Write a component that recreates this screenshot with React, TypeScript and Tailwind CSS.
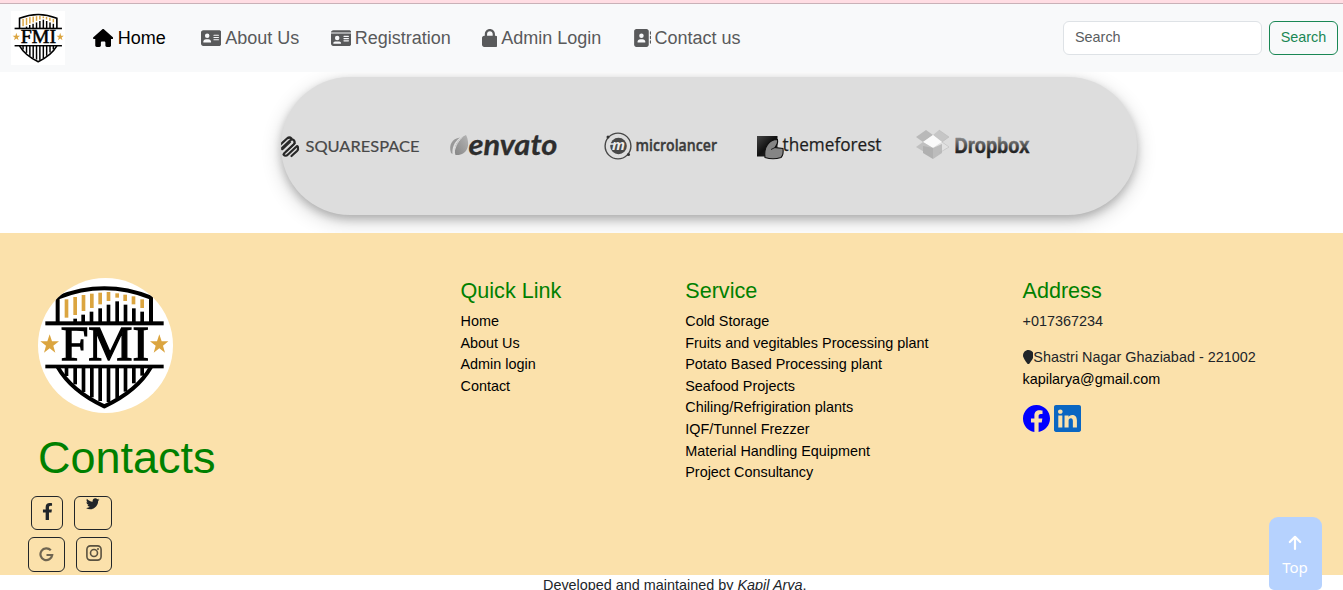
import type { ReactNode } from "react";
import {
  FaAddressBook,
  FaAddressCard,
  FaHouse,
  FaIdCard,
  FaLocationPin,
  FaLock,
} from "react-icons/fa6";
import { FaFacebookF, FaTwitter } from "react-icons/fa";
import { BsFacebook, BsLinkedin } from "react-icons/bs";

const goldBars = [
  [134, 103, 158],
  [160, 96, 150],
  [185, 90, 138],
  [210, 86, 129],
  [235, 83, 118],
  [260, 81, 108],
  [286, 85, 98],
  [310, 89, 108],
  [335, 94, 118],
  [361, 103, 129],
];

const blackBars = [
  [160, 161],
  [184, 149],
  [209, 140],
  [235, 130],
  [260, 119],
  [286, 109],
  [311, 119],
  [336, 130],
  [361, 140],
];

const lowerBars = [
  [134, 333],
  [160, 358],
  [185, 381],
  [210, 397],
  [235, 408],
  [260, 411],
  [286, 399],
  [311, 380],
  [336, 355],
  [361, 332],
];

function FmiLogo({ className, full }: { className: string; full?: boolean }) {
  return (
    <svg className={className} viewBox={full ? "49 44 405 405" : "54 39 405 405"}>
      <rect x="40" y="30" width="430" height="430" fill="#fff" />
      <path d="M113 173V98Q253 42 393 98V173" fill="none" stroke="#000" strokeWidth="12" />
      {goldBars.map(([x, a, b]) => (
        <rect key={x} x={x} y={a} width="11" height={b - a} fill="#dba540" />
      ))}
      {blackBars.map(([x, y]) => (
        <rect key={x} x={x} y={y} width="11" height={175 - y} />
      ))}
      <rect x="76" y="169" width="355" height="12" />
      <rect x="76" y="299" width="355" height="11" />
      <path d="M113 306C145 362 195 397 253 424C311 397 361 362 393 306" fill="none" stroke="#000" strokeWidth="12" />
      {lowerBars.map(([x, b]) => (
        <rect key={x} x={x} y="305" width="11" height={b - 305} />
      ))}
      <text
        x="122"
        y="286"
        textLength="265"
        lengthAdjust="spacingAndGlyphs"
        fontFamily="Liberation Serif, serif"
        fontSize="146"
        stroke="#000"
        strokeWidth="4"
      >
        FMI
      </text>
      <path fill="#dba540" d="M89 208L96 229H117L100 242L106 263L89 250L72 263L78 242L61 229H82Z" />
      <path fill="#dba540" d="M418 208L425 229H445L429 242L435 263L418 250L401 263L407 242L390 229H411Z" />
    </svg>
  );
}

function NavItem({ icon, label, className }: { icon: ReactNode; label: string; className: string }) {
  return (
    <a className={`flex items-center whitespace-nowrap text-[18px] leading-[27px] ${className}`}>
      {icon}
      <span>{label}</span>
    </a>
  );
}

function Sponsors() {
  return (
    <svg className="h-[138px] w-[856px]" viewBox="281 77 856 138">
      <defs>
        <linearGradient id="dropText" x1="0" y1="0" x2="0" y2="1">
          <stop offset="0.2" stopColor="#888" />
          <stop offset="0.75" stopColor="#222" />
        </linearGradient>
        <linearGradient id="forest" x1="0" y1="0" x2="1" y2="1">
          <stop offset="0" stopColor="#444" />
          <stop offset="0.5" stopColor="#111" />
          <stop offset="1" stopColor="#333" />
        </linearGradient>
        <linearGradient id="leaf" x1="1" y1="0" x2="0" y2="1">
          <stop offset="0" stopColor="#b5b5b5" />
          <stop offset="1" stopColor="#858585" />
        </linearGradient>
      </defs>

      <g fill="none" stroke="#282828" strokeWidth="2.2" strokeLinecap="round">
        <path d="M280 145L287 138.5Q289.500 136.500 291.500 138.500" />
        <path d="M279 151L290 140.500Q292.500 138.500 294 140.500Q295.500 142.500 293.500 144.500L284 153.500" />
        <path d="M282.500 149.500L290.500 142" strokeWidth="1.400" />
        <path d="M283.500 154.500Q285.500 157 288 154.500L296 147Q298 145 298 148Q298.500 149.500 297 151L291.500 156" />
        <path d="M286 151.500L295 143.500" strokeWidth="1.400" />
      </g>
      <text x="305.500" y="152.200" textLength="114" lengthAdjust="spacingAndGlyphs" fontFamily="Lato, sans-serif" fontSize="16" fill="#484848" stroke="#484848" strokeWidth="0.200">
        SQUARESPACE
      </text>

      <path d="M451 153C448.500 145 452 138.500 460 137.500C454 142 452 148 452.500 154Z" fill="#999" />
      <path d="M466 135C471 145 467 156 455.500 155C452.500 147 458 138.500 466 135Z" fill="url(#leaf)" />
      <path d="M454 155C454 149 457 142 462 137.500" fill="none" stroke="#ddd" strokeWidth="1" />
      <text x="468.500" y="155" textLength="89" lengthAdjust="spacingAndGlyphs" fontFamily="Lato, sans-serif" fontSize="29" fontWeight="700" fontStyle="italic" fill="#2d2d2d" stroke="#2d2d2d" strokeWidth="0.300">
        envato
      </text>

      <circle cx="618" cy="146" r="12.900" fill="none" stroke="#484848" strokeWidth="1.400" />
      <circle cx="618.500" cy="146" r="8.300" fill="#484848" />
      <circle cx="608" cy="137" r="1.500" fill="#333" />
      <circle cx="628.500" cy="154.500" r="1.500" fill="#333" />
      <text x="612" y="150" textLength="13" lengthAdjust="spacingAndGlyphs" fontFamily="Open Sans, sans-serif" fontSize="13.500" fontWeight="700" fontStyle="italic" fill="#eee">
        m
      </text>
      <path d="M609.500 144H614" stroke="#eee" strokeWidth="1.300" />
      <text x="635.500" y="151.300" textLength="81.500" lengthAdjust="spacingAndGlyphs" fontFamily="Open Sans, sans-serif" fontSize="16.500" fontWeight="600" fill="#3b3b3b" stroke="#3b3b3b" strokeWidth="0.4">
        microlancer
      </text>

      <rect x="757" y="136" width="20.500" height="20.500" fill="url(#forest)" />
      <path d="M765 157.500C763.500 147 769 139.500 777.500 139.500C778 142 777 145 775 147.500L783 148.500C783.500 152 783.500 155 781 157.500Q773 160 765 157.500Z" fill="#858585" stroke="#111" strokeWidth="1.100" />
      <path d="M771 149.500L775 147.500" stroke="#222" strokeWidth="1" />
      <text x="782.500" y="151.300" textLength="99" lengthAdjust="spacingAndGlyphs" fontFamily="Open Sans, sans-serif" fontSize="19" fill="#1d1d1d" stroke="#1d1d1d" strokeWidth="0.250">
        themeforest
      </text>

      <path d="M916 137L926 130L933 135L923 142Z" fill="#b9b9b9" />
      <path d="M933 135L939 130L949 137L942 142Z" fill="#c6c6c6" />
      <path d="M923 142L933 135L942 142L933 148Z" fill="#fafafa" />
      <path d="M916 147L923 142L933 148L926 153Z" fill="#c0c0c0" />
      <path d="M933 148L942 142L949 147L939 153Z" fill="#e2e2e2" />
      <path d="M923 153V146L933 148V159Z" fill="#b0b0b0" />
      <path d="M933 148L942 144V153L933 159Z" fill="#bcbcbc" />
      <path d="M939 130L949 137L942 142L949 147L939 153" fill="none" stroke="#b4b4b4" strokeWidth="0.500" />
      <text x="954.500" y="153" textLength="75" lengthAdjust="spacingAndGlyphs" fontFamily="Liberation Sans, sans-serif" fontSize="22" fontWeight="700" fill="url(#dropText)" stroke="url(#dropText)" strokeWidth="0.500">
        Dropbox
      </text>
    </svg>
  );
}

function LinkColumn({ title, items, className }: { title: string; items: string[]; className: string }) {
  return (
    <div className={className}>
      <h5 className="mb-[7px] text-[21.6px] leading-[26px] text-[#008000]">{title}</h5>
      <ul className="text-black">
        {items.map((item) => (
          <li key={item}>{item}</li>
        ))}
      </ul>
    </div>
  );
}

const socialBox = "flex justify-center rounded-[6px] border border-[#212529] text-[#212529]";

export default function App() {
  return (
    <div className="flex h-[590px] w-[1343px] flex-col overflow-hidden bg-white font-['Liberation_Sans',Arial,sans-serif] text-[14.4px] leading-[21.6px] text-[#212529]">
      <div className="h-1 shrink-0 border-b border-[#c9b1b7] bg-[#ffdde3]" />
      <nav className="relative z-10 flex h-[68px] shrink-0 items-center bg-[#f8f9fa] pr-[5px] pl-[11px]">
        <FmiLogo full className="mb-px h-[54px] w-[54px] bg-white" />
        <NavItem
          className="ml-[28px] w-[108px] text-black"
          label="Home"
          icon={<FaHouse className="mr-[4.500px] h-[18px] w-[20.25px] shrink-0" />}
        />
        <NavItem
          className="w-[129.500px] text-[#595a5b]"
          label="About Us"
          icon={<FaAddressCard className="mr-[4px] h-[18px] w-[20.25px] shrink-0" />}
        />
        <NavItem
          className="w-[151px] text-[#595a5b]"
          label="Registration"
          icon={<FaIdCard className="mr-[4px] h-[18px] w-[20.25px] shrink-0" />}
        />
        <NavItem
          className="w-[151px] text-[#595a5b]"
          label="Admin Login"
          icon={<FaLock className="mr-[4px] h-[18px] w-[15.75px] shrink-0" />}
        />
        <NavItem
          className="text-[#595a5b]"
          label="Contact us"
          icon={<FaAddressBook className="mr-[4px] h-[18px] w-[18px] shrink-0" />}
        />
        <form className="ml-auto flex">
          <input
            placeholder="Search"
            className="mr-[7px] h-[34px] w-[199px] rounded-[6px] border border-[#dee2e6] bg-white px-[11px] pb-[3px] text-[14.4px] placeholder:text-[#5a5d60]"
          />
          <button type="button" className="h-[34px] w-[69px] rounded-[6px] border border-[#198754] pb-px text-[14.4px] text-[#198754]">
            Search
          </button>
        </form>
      </nav>

      <section className="mt-[5px] ml-[281px] h-[138px] w-[856px] shrink-0 overflow-hidden rounded-full bg-[#ddd] shadow-[0_4px_8px_0_rgba(0,0,0,0.2),0_6px_20px_0_rgba(0,0,0,0.19)]">
        <Sponsors />
      </section>

      <footer className="relative mt-[18px] flex h-[342px] shrink-0 bg-[#fbe1ab]">
        <div className="w-[460.500px] pt-[45px]">
          <FmiLogo className="ml-[38px] h-[135px] w-[135px] rounded-full" />
          <h1 className="mt-[18px] ml-[38px] text-[45px] leading-[54px] text-[#008000]">Contacts</h1>
          <div className="mt-[11px] ml-[31px] flex gap-[11px]">
            <a className={`h-[34px] w-[32px] pt-[6px] ${socialBox}`}>
              <FaFacebookF className="h-[17px] w-[17px]" />
            </a>
            <a className={`h-[34px] w-[38px] ${socialBox}`}>
              <FaTwitter className="h-[13.500px] w-[13.500px]" />
            </a>
          </div>
          <div className="mt-[7px] ml-[28px] flex gap-[11px]">
            <a className={`h-[35px] w-[37px] items-center ${socialBox}`}>
              <svg className="h-[15px] w-[15px]" viewBox="0 0 15 15" fill="none" stroke="#6f6551" strokeWidth="2.200">
                <path d="M11.800 3.300A5.900 5.900 0 1 0 13.200 8H7.500" />
              </svg>
            </a>
            <a className={`h-[35px] w-[36px] pt-[7px] ${socialBox}`}>
              <svg className="h-[16px] w-[16px]" viewBox="0 0 16 16" fill="none" stroke="#5a5240" strokeWidth="1.600">
                <rect x="0.900" y="0.900" width="14.200" height="14.200" rx="3.500" />
                <circle cx="8" cy="8" r="3.500" />
                <circle cx="12" cy="4" r="1" fill="#5a5240" stroke="none" />
              </svg>
            </a>
          </div>
        </div>
        <LinkColumn className="w-[224.750px] pt-[45px]" title="Quick Link" items={["Home", "About Us", "Admin login", "Contact"]} />
        <LinkColumn
          className="w-[337.250px] pt-[45px]"
          title="Service"
          items={[
            "Cold Storage",
            "Fruits and vegitables Processing plant",
            "Potato Based Processing plant",
            "Seafood Projects",
            "Chiling/Refrigiration plants",
            "IQF/Tunnel Frezzer",
            "Material Handling Equipment",
            "Project Consultancy",
          ]}
        />
        <div className="pt-[45px]">
          <h5 className="mb-[7px] text-[21.6px] leading-[26px] text-[#008000]">Address</h5>
          <p className="mb-[14.400px]">+017367234</p>
          <p className="flex items-center">
            <FaLocationPin className="mb-[2px] h-[14.400px] w-[10.800px]" />
            Shastri Nagar Ghaziabad - 221002
          </p>
          <p className="text-black">kapilarya@gmail.com</p>
          <div className="mt-[15px] flex gap-1">
            <BsFacebook className="h-[27px] w-[27px] text-[#0000ff]" />
            <BsLinkedin className="h-[27px] w-[27px] text-[#0a66c2]" />
          </div>
        </div>
      </footer>

      <p className="shrink-0 pl-[543px]">
        Developed and maintained by <i>Kapil Arya</i>.
      </p>

      <button
        type="button"
        className="absolute top-[517px] left-[1269px] z-20 flex h-[73px] w-[53px] flex-col items-center rounded-t-[9px] rounded-b-[5px] bg-[#b6d2fe] pt-[18px] pr-px font-['Noto_Sans',sans-serif] text-white"
      >
        <svg
          className="h-[16px] w-[14px]"
          viewBox="0 0 14 16"
          fill="none"
          stroke="currentColor"
          strokeWidth="2.200"
          strokeLinecap="round"
          strokeLinejoin="round"
        >
          <path d="M7 14V2M1.800 7L7 1.800L12.200 7" />
        </svg>
        <span className="mt-[6px] text-[15px] leading-[21px]">Top</span>
      </button>
    </div>
  );
}
